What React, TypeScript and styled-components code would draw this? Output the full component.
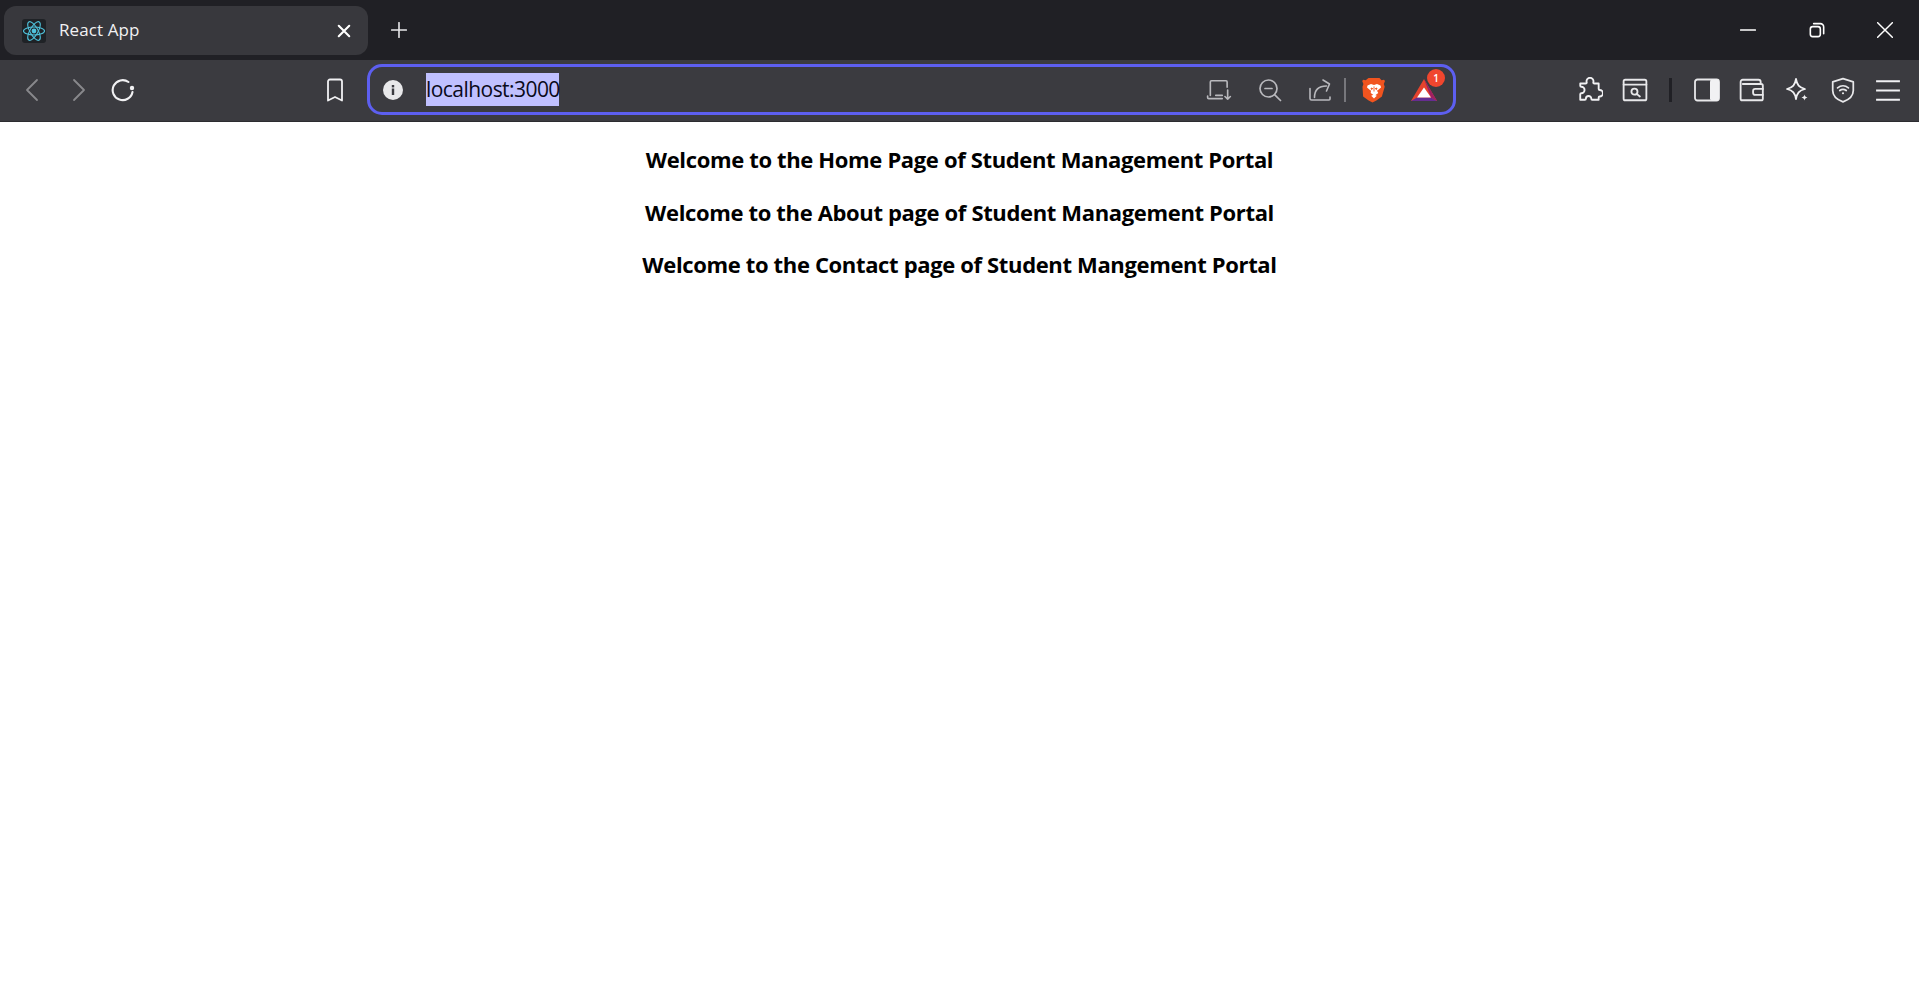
import styled, { createGlobalStyle } from "styled-components";
import { ReactNode } from "react";

const GlobalStyle = createGlobalStyle`
  html, body {
    margin: 0;
    padding: 0;
    background: #fff;
  }
  body {
    font-family: "Open Sans", "Liberation Sans", sans-serif;
    overflow: hidden;
  }
`;

const Page = styled.div`
  width: 1919px;
  height: 1007px;
  display: flex;
  flex-direction: column;
`;

const TabStrip = styled.div`
  height: 60px;
  background: #202025;
  display: flex;
  align-items: flex-start;
  padding: 6px 0 0 4px;
  box-sizing: border-box;
`;

const Tab = styled.div`
  width: 364px;
  height: 49px;
  background: #38383d;
  border-radius: 12px;
  display: flex;
  align-items: center;
  padding: 0 17px 0 18px;
  box-sizing: border-box;
`;

const Favicon = styled.div`
  width: 24px;
  height: 24px;
  background: #1f2226;
  border-radius: 3px;
  display: flex;
  align-items: center;
  justify-content: center;
`;

const TabTitle = styled.span`
  flex: 1;
  margin: -2px 0 0 13px;
  color: #f1f1f3;
  font-size: 17px;
  letter-spacing: 0.1px;
`;

const TabClose = styled.div`
  width: 14px;
  height: 14px;
  display: flex;
`;

const NewTab = styled.div`
  width: 16px;
  height: 16px;
  margin: 16px 0 0 23px;
  display: flex;
`;

const WindowControls = styled.div`
  margin-left: auto;
  height: 48px;
  display: flex;
  align-items: center;
  padding-right: 26px;
  gap: 52.5px;
`;

const WinButton = styled.div`
  width: 16px;
  height: 16px;
  display: flex;
`;

const Toolbar = styled.div`
  height: 62px;
  background: #3b3b40;
  border-bottom: 1px solid #2c2c30;
  display: flex;
  align-items: center;
  box-sizing: border-box;
  padding: 0 0 2px 21px;
`;

const NavGroup = styled.div`
  display: flex;
  align-items: center;
  gap: 21px;
  width: 302px;
`;

const IconSlot = styled.div<{ $w?: number }>`
  width: ${(p) => p.$w ?? 24}px;
  height: 24px;
  display: flex;
  align-items: center;
  justify-content: center;
  flex: none;
`;

const BookmarkSlot = styled(IconSlot)`
  margin-right: 20px;
`;

const UrlBar = styled.div`
  width: 1089px;
  height: 51px;
  border: 3px solid #5d5ff0;
  border-radius: 15px;
  box-sizing: border-box;
  display: flex;
  align-items: center;
  padding: 0 15px 0 12px;
  flex: none;
`;

const UrlText = styled.span`
  margin-left: 22px;
  background: #c0c0ff;
  color: #0a0a1a;
  height: 33px;
  line-height: 33px;
  font-size: 21px;
  letter-spacing: -0.55px;
  width: 133px;
  white-space: nowrap;
`;

const UrlActions = styled.div`
  margin-left: auto;
  display: flex;
  align-items: center;
`;

const UrlIcon = styled(IconSlot)`
  margin-left: 26px;
`;

const UrlDivider = styled.div`
  width: 2px;
  height: 24px;
  background: #77777c;
  margin: 0 16px 0 12px;
`;

const BatWrap = styled.div`
  position: relative;
  width: 28px;
  height: 24px;
  margin-left: 24px;
`;

const Badge = styled.span`
  position: absolute;
  top: -9px;
  right: -7px;
  width: 18px;
  height: 18px;
  border-radius: 50%;
  background: #f0462e;
  color: #fff;
  font-size: 10px;
  font-weight: 600;
  line-height: 18px;
  text-align: center;
`;

const RightIcons = styled.div`
  margin-left: 121px;
  display: flex;
  align-items: center;
  gap: 19.3px;
`;

const BarDivider = styled.div`
  width: 3px;
  height: 24px;
  background: #202025;
  margin: 0 3px 0 1px;
`;

const Content = styled.main`
  flex: 1;
  background: #fff;
  padding-top: 20px;
`;

const Heading = styled.h3`
  margin: 0 0 17.6px;
  text-align: center;
  color: #000;
  font-size: 22px;
  font-weight: 700;
  line-height: 35px;
  letter-spacing: -0.35px;
`;

const Stroke = ({ children, size = 24, color = "#e8e8ea", width = 2 }: { children: ReactNode; size?: number; color?: string; width?: number }) => (
  <svg width={size} height={size} viewBox="0 0 24 24" fill="none" stroke={color} strokeWidth={width} strokeLinecap="round" strokeLinejoin="round">
    {children}
  </svg>
);

const ReactLogo = () => (
  <svg width="24" height="24" viewBox="-12 -12 24 24" fill="none" stroke="#4fc3dc" strokeWidth="1.100">
    <circle r="2.400" fill="#4fc3dc" stroke="none" />
    <ellipse rx="10.500" ry="4" />
    <ellipse rx="10.500" ry="4" transform="rotate(60)" />
    <ellipse rx="10.500" ry="4" transform="rotate(120)" />
  </svg>
);

const BraveLion = () => (
  <svg width="24" height="26" viewBox="0 0 24 26">
    <path d="M6.500 1h11l2 2.200 2.500-.4 1 1.200-1.200 3 .9 2.800-2.800 9.700-5.500 4-3.900 2-3.900-2-5.500-4L.5 9.800l.9-2.800L.2 4l1-1.200 2.500.4z" fill="#f1541f" />
    <path d="M5.500 8.500L9 7l3 1 3-1 3.500 1.500.5 2-3 2.500-1 .8 1.300 2.200-3.800 2.800-3.800-2.800L9 13.800 8 13l-3-2.500z" fill="#fff" />
    <path d="M9 11l1.800.6-1.300 1zM15 11l-1.800.6 1.300 1zM12 9.500v5" stroke="#f1541f" strokeWidth="0.900" fill="#f1541f" />
    <path d="M9.200 18.800L12 17.500l2.800 1.300L12 21.500z" fill="#fff" />
  </svg>
);

const BatLogo = () => (
  <svg width="28" height="24" viewBox="0 0 28 24">
    <path d="M14 1L1 23h26z" fill="#e5432d" />
    <path d="M14 1l13 22-6-3.500z" fill="#9e1f63" />
    <path d="M1 23h26l-6-3.500H7z" fill="#662d91" />
    <path d="M14 9.500L7 19.500h14z" fill="#fff" />
  </svg>
);

const App = () => (
  <Page>
    <GlobalStyle />
    <TabStrip>
      <Tab>
        <Favicon>
          <ReactLogo />
        </Favicon>
        <TabTitle>React App</TabTitle>
        <TabClose>
          <Stroke size={14} color="#fff" width={3.600}>
            <path d="M3 3l18 18M21 3L3 21" />
          </Stroke>
        </TabClose>
      </Tab>
      <NewTab>
        <Stroke size={16} color="#e8e8ea" width={2.400}>
          <path d="M12 1v22M1 12h22" />
        </Stroke>
      </NewTab>
      <WindowControls>
        <WinButton>
          <Stroke size={16} color="#fff" width={2.400}>
            <path d="M1 12h22" />
          </Stroke>
        </WinButton>
        <WinButton>
          <Stroke size={16} color="#fff" width={2.400}>
            <rect x="2" y="7" width="15" height="15" rx="3.500" />
            <path d="M7 2.500h10a5 5 0 0 1 5 5v10" />
          </Stroke>
        </WinButton>
        <WinButton>
          <Stroke size={16} color="#fff" width={2.200}>
            <path d="M1 1l22 22M23 1L1 23" />
          </Stroke>
        </WinButton>
      </WindowControls>
    </TabStrip>
    <Toolbar>
      <NavGroup>
        <IconSlot>
          <Stroke color="#88888c" width={1.800}>
            <path d="M16 2L6 12l10 10" />
          </Stroke>
        </IconSlot>
        <IconSlot>
          <Stroke color="#88888c" width={1.800}>
            <path d="M8 2l10 10L8 22" />
          </Stroke>
        </IconSlot>
        <IconSlot>
          <Stroke size={26} color="#f1f1f3" width={2.100}>
            <path d="M21.500 14a10 10 0 1 1-4-10" />
            <circle cx="21" cy="10" r="2.200" fill="#f1f1f3" stroke="none" />
          </Stroke>
        </IconSlot>
      </NavGroup>
      <BookmarkSlot>
        <Stroke size={26} color="#f1f1f3" width={1.800}>
          <path d="M5 3.500a2 2 0 0 1 2-2h10a2 2 0 0 1 2 2v19l-7-3.500L5 22.500z" />
        </Stroke>
      </BookmarkSlot>
      <UrlBar>
        <IconSlot $w={22}>
          <svg width="20" height="20" viewBox="0 0 20 20">
            <circle cx="10" cy="10" r="10" fill="#e8e8ea" />
            <rect x="8.800" y="8.500" width="2.400" height="6.500" fill="#3b3b40" />
            <rect x="8.800" y="5" width="2.400" height="2.400" fill="#3b3b40" />
          </svg>
        </IconSlot>
        <UrlText>localhost:3000</UrlText>
        <UrlActions>
          <IconSlot $w={26}>
            <Stroke size={26} color="#b9b9bd" width={1.500}>
              <path d="M19.500 9.500V4.500a1 1 0 0 0-1-1H5a1 1 0 0 0-1 1v12.500M1.500 17.500v1.500a1 1 0 0 0 1 1H15" />
              <path d="M9 17h6" />
              <path d="M20 12v8.500M17.500 18L20 20.500 22.500 18" />
            </Stroke>
          </IconSlot>
          <UrlIcon>
            <Stroke size={26} color="#b9b9bd" width={1.700}>
              <circle cx="10.500" cy="10.500" r="8.500" />
              <path d="M7 10.500h7M16.800 16.800L22.500 22.500" />
            </Stroke>
          </UrlIcon>
          <UrlIcon>
            <Stroke size={26} color="#b9b9bd" width={1.600}>
              <path d="M2 10.500V20.500a1.500 1.500 0 0 0 1.500 1.500H21a1 1 0 0 0 1-1v-2" />
              <path d="M6.500 19.500C6.500 12.500 10 8 18.500 8M15 2l6.500 4-3 7" />
            </Stroke>
          </UrlIcon>
          <UrlDivider />
          <IconSlot $w={24}>
            <BraveLion />
          </IconSlot>
          <BatWrap>
            <BatLogo />
            <Badge>1</Badge>
          </BatWrap>
        </UrlActions>
      </UrlBar>
      <RightIcons>
        <IconSlot $w={26}>
          <Stroke size={26} color="#f1f1f3" width={1.700}>
            <path d="M9 5a3.200 3.200 0 1 1 6 0c0 .8.500 1 1 1h4v5c0 .5.500 1 1 1a3 3 0 0 1 0 6c-.5 0-1 .5-1 1v2h-6c-.5 0-.8-.5-.8-1a2.500 2.500 0 0 0-5 0c0 .5-.5 1-1 1H3v-5c0-.5.500-1 1-1a3 3 0 1 0 0-6c-.5 0-1-.5-1-1V6h5c.5 0 1-.5 1-1z" />
          </Stroke>
        </IconSlot>
        <IconSlot $w={26}>
          <Stroke size={26} color="#e8e8ea" width={1.700}>
            <rect x="1.500" y="2.500" width="21" height="19" rx="1.500" />
            <path d="M1.500 7h21" />
            <circle cx="11.500" cy="13.500" r="2.800" />
            <path d="M13.800 15.800L16.500 18" />
          </Stroke>
        </IconSlot>
        <BarDivider />
        <IconSlot $w={26}>
          <svg width="26" height="24" viewBox="0 0 26 24">
            <rect x="1" y="1.500" width="24" height="21" rx="2.500" fill="none" stroke="#e8e8ea" strokeWidth="1.800" />
            <rect x="16" y="1.500" width="9" height="21" rx="2" fill="#f1f1f3" />
          </svg>
        </IconSlot>
        <IconSlot $w={26}>
          <Stroke size={26} color="#e8e8ea" width={1.700}>
            <path d="M20 6.500V4.500a2 2 0 0 0-2-2H3.500a2 2 0 0 0-2 2V20a1.500 1.500 0 0 0 1.500 1.500h17.500a1.500 1.500 0 0 0 1.500-1.500V8a1.500 1.500 0 0 0-1.500-1.500H3.500" />
            <path d="M22 11h-7a2 2 0 0 0-2 2v1.500a2 2 0 0 0 2 2h7" />
          </Stroke>
        </IconSlot>
        <IconSlot $w={26}>
          <svg width="26" height="26" viewBox="0 0 26 26" fill="none">
            <path d="M12 2c1 6 3 8.500 9 10-6 1.500-8 4-9 10-1-6-3-8.500-9-10 6-1.500 8-4 9-10z" stroke="#f1f1f3" strokeWidth="1.800" strokeLinejoin="round" />
            <path d="M20.500 17.500c.5 2 1 2.500 3 3-2 .5-2.500 1-3 3-.5-2-1-2.500-3-3 2-.5 2.500-1 3-3z" fill="#f1f1f3" />
          </svg>
        </IconSlot>
        <IconSlot $w={26}>
          <Stroke size={26} color="#e8e8ea" width={1.600}>
            <path d="M12 1.500l9.500 3v8c0 5-4 8.500-9.500 10.500C6.500 21 2.500 17.500 2.500 12.500v-8z" />
            <path d="M7 10c3-2.500 7-2.500 10 0M9 12.500c1.800-1.400 4.200-1.400 6 0" />
            <circle cx="12" cy="15" r="1" fill="#e8e8ea" stroke="none" />
          </Stroke>
        </IconSlot>
        <IconSlot $w={26}>
          <Stroke size={26} color="#f1f1f3" width={1.800}>
            <path d="M1 4h22M1 12.500h22M1 21h22" strokeLinecap="butt" />
          </Stroke>
        </IconSlot>
      </RightIcons>
    </Toolbar>
    <Content>
      <Heading>Welcome to the Home Page of Student Management Portal</Heading>
      <Heading>Welcome to the About page of Student Management Portal</Heading>
      <Heading>Welcome to the Contact page of Student Mangement Portal</Heading>
    </Content>
  </Page>
);

export default App;
